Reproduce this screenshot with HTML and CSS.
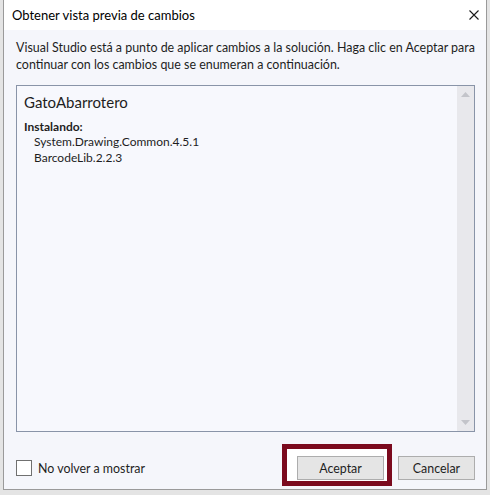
FILE: index.html
```html
<!DOCTYPE html>
<html lang="es">
<head>
<meta charset="utf-8">
<title>Obtener vista previa de cambios</title>
<link rel="stylesheet" href="styles.css">
</head>
<body>
<div class="dialog">
  <div class="titlebar">
    <span class="title">Obtener vista previa de cambios</span>
    <span class="close" aria-label="Cerrar">
      <svg width="10" height="10" viewBox="0 0 10 10"><path d="M0.5 0.5 L9.5 9.5 M9.5 0.5 L0.5 9.5" stroke="#1a1a1a" stroke-width="1.1" fill="none"/></svg>
    </span>
  </div>
  <div class="body">
    <p class="message">Visual Studio está a punto de aplicar cambios a la solución. Haga clic en Aceptar para continuar con los cambios que se enumeran a continuación.</p>
    <div class="listbox">
      <div class="list-content">
        <div class="project">GatoAbarrotero</div>
        <div class="section">Instalando:</div>
        <div class="item">System.Drawing.Common.4.5.1</div>
        <div class="item">BarcodeLib.2.2.3</div>
      </div>
      <div class="scrollbar">
        <svg class="arrow" width="9" height="5" viewBox="0 0 9 5"><path d="M0 5 L4.5 0 L9 5 Z" fill="#c3c4ca"/></svg>
        <svg class="arrow" width="9" height="5" viewBox="0 0 9 5"><path d="M0 0 L4.5 5 L9 0 Z" fill="#c3c4ca"/></svg>
      </div>
    </div>
    <div class="footer">
      <label class="check"><span class="box"></span><span>No volver a mostrar</span></label>
      <div class="buttons">
        <span class="highlight"><button class="btn btn-ok">Aceptar</button></span>
        <button class="btn btn-cancel">Cancelar</button>
      </div>
    </div>
  </div>
</div>
</body>
</html>
```
FILE: styles.css
```css
html, body {
  margin: 0;
  padding: 0;
}
body {
  width: 490px;
  height: 495px;
  background: #e4e4e4;
  font-family: Lato, "Noto Sans", sans-serif;
  font-size: 12px;
  color: #1e1e1e;
  overflow: hidden;
}
.dialog {
  margin-left: 3px;
  width: 482px;
  height: 489px;
  border: 1px solid #9a9a9a;
  border-top: none;
  display: flex;
  flex-direction: column;
  background: #f5f6fb;
}
.titlebar {
  height: 30px;
  flex: none;
  background: #ffffff;
  display: flex;
  align-items: center;
  justify-content: space-between;
  padding: 0 7px 0 8px;
}
.title {
  color: #000;
  font-size: 13px;
}
.close {
  display: flex;
  width: 10px;
  height: 10px;
  margin-top: -1px;
}
.body {
  flex: 1;
  display: flex;
  flex-direction: column;
  padding: 0 11px 0 12px;
}
.message {
  margin: 10px 0 12px;
  font-size: 12.45px;
  line-height: 16.5px;
}
.listbox {
  height: 345px;
  border: 1px solid #8994a8;
  background: #f7f8fd;
  display: flex;
}
.list-content {
  flex: 1;
  padding: 6px 7px;
}
.project {
  font-size: 15px;
  line-height: 21px;
  margin-bottom: 6px;
}
.section {
  font-weight: bold;
  line-height: 15px;
}
.item {
  padding-left: 10px;
  line-height: 15.5px;
}
.scrollbar {
  width: 17px;
  background: #e8e8ec;
  display: flex;
  flex-direction: column;
  justify-content: space-between;
  align-items: center;
  padding: 6px 0 6px;
}
.footer {
  display: flex;
  justify-content: space-between;
  align-items: center;
  margin-top: 24px;
}
.check {
  display: flex;
  align-items: center;
  gap: 6px;
  font-size: 12.4px;
}
.box {
  width: 14px;
  height: 14px;
  border: 1px solid #707070;
  background: #fff;
}
.buttons {
  display: flex;
  gap: 14px;
}
.highlight {
  position: relative;
  display: flex;
}
.highlight::before {
  content: "";
  position: absolute;
  left: -15px;
  right: -8px;
  top: -12px;
  bottom: -6px;
  border: 5px solid #7b0a1e;
  background: #ffffff;
}
.btn {
  position: relative;
  height: 24px;
  border: 1px solid #adadad;
  background: #e5e5e5;
  font-family: inherit;
  font-size: 12.4px;
  color: #1e1e1e;
  padding: 0;
}
.btn-ok {
  width: 87px;
}
.btn-cancel {
  width: 77px;
}
```
